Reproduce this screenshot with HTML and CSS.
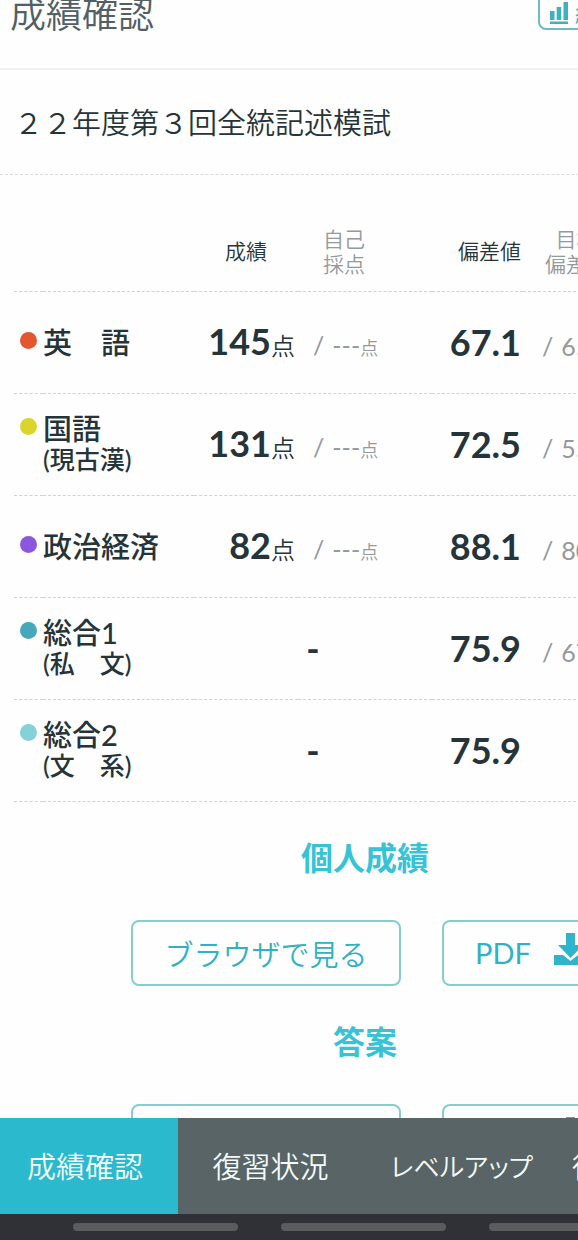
FILE: index.html
```html
<!DOCTYPE html>
<html lang="ja">
<head>
<meta charset="utf-8">
<meta name="viewport" content="width=device-width, initial-scale=1">
<title>成績確認</title>
<link rel="stylesheet" href="styles.css">
</head>
<body>
<div class="app">
  <div class="screen">
    <div class="page">
      <header class="page-header">
        <h1 class="page-title">成績確認</h1>
        <a class="stats-link" href="#stats">
          <svg class="stats-icon" viewBox="0 0 18 22" aria-hidden="true"><path d="M0 9h4.500v9H0zM6.700 5h4.500v13H6.700zM13.500 0H18v18h-4.500zM0 19.500h18V22H0z"/></svg>
          統計
        </a>
      </header>
      <h2 class="exam-title">２２年度第３回全統記述模試</h2>

      <table class="scores">
        <colgroup>
          <col class="col-dot"><col class="col-name"><col class="col-score"><col class="col-self"><col class="col-dev"><col class="col-goal">
        </colgroup>
        <thead>
          <tr>
            <td></td><td></td>
            <th class="head" scope="col">成績</th>
            <th class="head head-self" scope="col">自己<br>採点</th>
            <th class="head head-dev" scope="col">偏差値</th>
            <th class="head head-goal" scope="col">目標<br>偏差値</th>
          </tr>
        </thead>
        <tbody>
          <tr>
            <td><span class="dot dot-english"></span></td>
            <th class="name" scope="row">英　語</th>
            <td class="score">145<span class="unit">点</span></td>
            <td class="side"><span class="slash">/</span>---<span class="small-unit">点</span></td>
            <td class="dev">67.1</td>
            <td class="side goal"><span class="slash">/</span>65.0</td>
          </tr>
          <tr>
            <td><span class="dot dot-japanese dot-raised"></span></td>
            <th class="name" scope="row">国語<span class="sub">(現古漢)</span></th>
            <td class="score">131<span class="unit">点</span></td>
            <td class="side"><span class="slash">/</span>---<span class="small-unit">点</span></td>
            <td class="dev">72.5</td>
            <td class="side goal"><span class="slash">/</span>55.0</td>
          </tr>
          <tr>
            <td><span class="dot dot-civics"></span></td>
            <th class="name" scope="row">政治経済</th>
            <td class="score">82<span class="unit">点</span></td>
            <td class="side"><span class="slash">/</span>---<span class="small-unit">点</span></td>
            <td class="dev">88.1</td>
            <td class="side goal"><span class="slash">/</span>80.0</td>
          </tr>
          <tr>
            <td><span class="dot dot-total1 dot-raised"></span></td>
            <th class="name" scope="row">総合1<span class="sub">(私　文)</span></th>
            <td class="none" colspan="2">-</td>
            <td class="dev">75.9</td>
            <td class="side goal"><span class="slash">/</span>67.5</td>
          </tr>
          <tr>
            <td><span class="dot dot-total2 dot-raised"></span></td>
            <th class="name" scope="row">総合2<span class="sub">(文　系)</span></th>
            <td class="none" colspan="2">-</td>
            <td class="dev">75.9</td>
            <td></td>
          </tr>
        </tbody>
      </table>

      <section class="docs">
        <h3 class="docs-title">個人成績</h3>
        <div class="actions">
          <button class="action action-view" type="button">ブラウザで見る</button>
          <button class="action action-pdf" type="button">PDF
            <svg class="download-icon" viewBox="0 0 34 32" aria-hidden="true"><path d="M12 0h9v12h8L16.500 25 4 12h8z"/><path d="M0 22h9l7.500 6 7.500-6h10v10H0z"/></svg>
          </button>
        </div>
      </section>
      <section class="docs">
        <h3 class="docs-title">答案</h3>
        <div class="actions">
          <button class="action action-view" type="button">ブラウザで見る</button>
          <button class="action action-pdf" type="button">PDF
            <svg class="download-icon" viewBox="0 0 34 32" aria-hidden="true"><path d="M12 0h9v12h8L16.500 25 4 12h8z"/><path d="M0 22h9l7.500 6 7.500-6h10v10H0z"/></svg>
          </button>
        </div>
      </section>
    </div>
  </div>
  <nav class="tabs">
    <a class="tab tab-active" href="#results" aria-current="page">成績確認</a>
    <a class="tab" href="#review">復習状況</a>
    <a class="tab tab-kana" href="#levelup">レベルアップ</a>
    <a class="tab" href="#guide">復習ガイド</a>
  </nav>
  <div class="system-bar"><span class="pill"></span><span class="pill"></span><span class="pill"></span></div>
</div>
</body>
</html>
```
FILE: styles.css
```css
* { box-sizing: border-box; }

body {
  margin: 0;
  background: #fefefe;
  color: #26343a;
  font-family: Lato, "Noto Sans CJK JP", sans-serif;
}

.app {
  display: flex;
  flex-direction: column;
  height: 100vh;
  overflow: hidden;
}

.screen {
  flex: 1;
  min-height: 0;
  overflow: hidden;
}

.page { min-width: 730px; }

/* Header, partly scrolled out of view */
.page-header {
  display: flex;
  justify-content: space-between;
  align-items: flex-start;
  height: 82px;
  margin-top: -12px;
  padding: 0 10px;
  border-bottom: 2px solid #f0f1f2;
}

.page-title {
  margin: 0;
  font-size: 36px;
  font-weight: 350;
  line-height: 52px;
  color: #526064;
}

.stats-link {
  display: flex;
  align-items: center;
  gap: 7px;
  width: 182px;
  height: 42px;
  padding: 8px 10px 0;
  border: 2px solid #6cbcc4;
  border-radius: 8px;
  color: #3fb3c2;
  font-size: 22px;
  text-decoration: none;
}

.stats-icon { width: 18px; height: 22px; fill: #3fb0c0; }

.exam-title {
  margin: 0;
  padding: 2px 14px 0;
  border-bottom: 1px dashed #d8dcde;
  font-size: 29px;
  font-weight: 350;
  line-height: 102px;
}

/* Score table */
.scores {
  width: 702px;
  margin: 14px 14px 0;
  border-collapse: collapse;
  table-layout: fixed;
}

.col-dot { width: 29px; }
.col-name { width: 151px; }
.col-score { width: 104px; }
.col-self { width: 134px; }
.col-dev { width: 91px; }

.scores th,
.scores td {
  height: 102px;
  padding: 0;
  border-bottom: 1px dashed #cfd3d5;
  vertical-align: middle;
  white-space: nowrap;
}

.scores .head {
  padding-top: 22px;
  font-size: 21px;
  font-weight: 350;
  line-height: 25px;
}

.scores .head-self { padding-right: 42px; color: #93999c; }
.scores .head-dev { padding-right: 2px; text-align: right; }
.scores .head-goal { padding-right: 86px; color: #93999c; }

.dot {
  display: block;
  width: 17px;
  height: 17px;
  margin: 0 0 4px 6px;
  border-radius: 50%;
}

.dot-raised { margin-bottom: 36px; }
.dot-english { background: #e4572e; }
.dot-japanese { background: #dbd429; }
.dot-civics { background: #8a57de; }
.dot-total1 { background: #46a8ba; }
.dot-total2 { background: #85d1da; }

.name {
  font-size: 29px;
  font-weight: 500;
  line-height: 31px;
  text-align: left;
}

.sub { display: block; font-size: 25px; line-height: 31px; }

.score,
.dev {
  font-size: 36px;
  font-weight: 700;
  line-height: 44px;
  text-align: right;
}

.scores .score { padding: 3px 3px 0 0; }
.scores .dev { padding-right: 2px; }
.unit { font-size: 24px; font-weight: 350; }

.side {
  color: #93999c;
  font-size: 25px;
  line-height: 44px;
}

.scores .side { padding: 8px 0 0 15px; }
.scores .goal { padding-left: 19px; }
.slash { margin-right: 8px; }
.small-unit { font-size: 18px; font-weight: 350; }

.none {
  font-size: 36px;
  font-weight: 700;
  line-height: 44px;
  text-align: center;
}

/* Document links */
.docs { padding: 33px 0 0; }

.docs-title {
  margin: 0;
  color: #37c3d6;
  font-size: 32px;
  font-weight: 700;
  line-height: 46px;
  text-align: center;
}

.actions {
  display: flex;
  justify-content: center;
  gap: 41px;
  margin-top: 39px;
}

.action {
  display: flex;
  align-items: center;
  height: 66px;
  border: 2px solid #86cdd0;
  border-radius: 8px;
  background: #fefefe;
  color: #2eb2c4;
  font-family: inherit;
  font-size: 29px;
  font-weight: 350;
}

.action-view { justify-content: center; width: 270px; padding: 0; }
.action-pdf { gap: 23px; width: 157px; padding: 0 0 0 31px; font-weight: 400; }
.download-icon { flex: none; width: 34px; height: 32px; margin-bottom: 8px; fill: #2eb5cb; }

/* Bottom tabs */
.tabs {
  display: grid;
  grid-template-columns: 178px 185px 185px 182px;
  height: 96px;
  background: #596466;
  overflow: hidden;
}

.tab {
  display: flex;
  align-items: center;
  justify-content: center;
  padding-bottom: 2px;
  color: #f2fafa;
  font-size: 29px;
  font-weight: 350;
  font-feature-settings: "palt";
  text-decoration: none;
  white-space: nowrap;
}

.tab-active { padding-right: 8px; background: #2ab9cd; }
.tab-kana { padding-left: 12px; font-size: 26px; }

.system-bar {
  display: flex;
  align-items: center;
  gap: 43px;
  height: 26px;
  padding-left: 73px;
  background: #303136;
  overflow: hidden;
}

.pill { flex: none; width: 165px; height: 8px; border-radius: 4px; background: #5b5c60; }
```
